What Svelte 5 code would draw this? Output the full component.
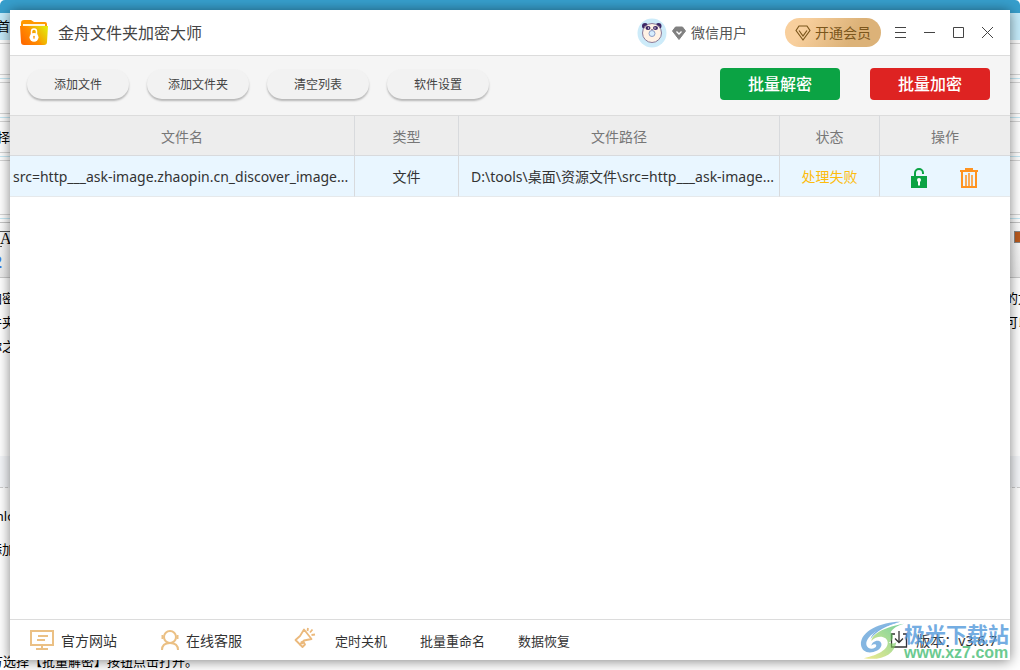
<script>
  let files = $state([
    {
      name: 'src=http___ask-image.zhaopin.cn_discover_image...',
      type: '文件',
      path: 'D:\\tools\\桌面\\资源文件\\src=http___ask-image...',
      status: '处理失败'
    }
  ])

  const tools = ['添加文件', '添加文件夹', '清空列表', '软件设置']
  const links = ['定时关机', '批量重命名', '数据恢复']

  function removeFile(index) {
    files.splice(index, 1)
  }

  function handleTool(tool) {
    if (tool === '清空列表') files = []
  }
</script>

<div class="desktop">
  <div class="page">
    <div class="page__top"></div>
    <div class="page__tabs"><span>首</span></div>
    <div class="page__bar"></div>
    <div class="page__bar"></div>
    <div class="page__bar"><span>择</span></div>
    <div class="page__bar page__bar--tall"></div>
    <div class="page__editor">
      <span class="page__font">A<b>2</b></span>
      <i class="page__swatch"></i>
    </div>
    <div class="page__text">
      <p><span>加密</span><span>的文</span></p>
      <p><span>件夹</span><span>可以</span></p>
      <p><span>你之</span></p>
    </div>
    <div class="page__band"></div>
    <div class="page__list">
      <p><span>downlo</span></p>
      <p><span>添加</span></p>
    </div>
    <p class="page__last">方选择【批量解密】按钮点击打开。</p>
  </div>

  <main class="window">
    <header class="titlebar">
      <svg class="titlebar__logo" width="28" height="26" viewBox="0 0 28 26" aria-hidden="true">
        <defs>
          <linearGradient id="folder" x1="0" y1="0.7" x2="1" y2="0.2">
            <stop offset="0" stop-color="#ff6a00" />
            <stop offset="0.5" stop-color="#ff9200" />
            <stop offset="0.55" stop-color="#f5a800" />
            <stop offset="1" stop-color="#e4e70b" />
          </linearGradient>
        </defs>
        <path d="M1 3a3 3 0 0 1 3-3h7l3 2h11a2 2 0 0 1 2 2v8H1z" fill="#ff9800" />
        <path d="M3 4h22v5H3z" fill="#fff5df" />
        <path d="M0 6h28l-1 16a3 3 0 0 1-3 3H4a3 3 0 0 1-3-3z" fill="url(#folder)" />
        <path d="M11.5 14v-2.5a2.5 2.5 0 0 1 5 0V14" fill="none" stroke="#fff" stroke-width="1.5" />
        <ellipse cx="14" cy="17.3" rx="4.5" ry="4.4" fill="#fff" />
        <circle cx="14" cy="16.7" r="1" fill="#ffa42b" />
        <path d="M14 17v2" stroke="#ffa42b" />
      </svg>
      <h1 class="titlebar__name">金舟文件夹加密大师</h1>

      <div class="user">
        <svg width="30" height="30" viewBox="0 0 30 30" aria-hidden="true">
          <circle cx="15" cy="15" r="14.5" fill="#cdebf9" />
          <circle cx="8" cy="8" r="3" fill="#3d2665" />
          <circle cx="21.5" cy="8" r="3" fill="#3d2665" />
          <ellipse cx="15" cy="15" rx="9.5" ry="9.5" fill="#fff2e5" stroke="#8b7a98" />
          <ellipse cx="11" cy="10" rx="2.5" ry="2" fill="#3d2665" />
          <ellipse cx="18.5" cy="10" rx="2.5" ry="2" fill="#3d2665" />
          <circle cx="11.5" cy="10" r="0.7" fill="#fff" />
          <circle cx="18" cy="10" r="0.7" fill="#fff" />
          <path d="M14 11h2l-1 1z" fill="#3d2665" />
          <circle cx="15" cy="15.5" r="3" fill="#d5edff" stroke="#8e9dc4" />
        </svg>
        <svg width="14" height="14" viewBox="0 0 14 14" aria-hidden="true">
          <path d="M3.5 1h7L13.5 5 7 13.5.5 5z" fill="#808080" stroke="#808080" stroke-linejoin="round" />
          <path d="M4.500 5.500 7 8l2.500-2.500" fill="none" stroke="#fff" stroke-width="1.3" />
        </svg>
        <span>微信用户</span>
      </div>

      <button class="vip">
        <svg width="16" height="16" viewBox="0 0 16 16" fill="none" stroke="#7b561c" stroke-width="1.2" aria-hidden="true">
          <path d="M4 1h8l3 4.500L8 15 1 5.500z" stroke-linejoin="round" />
          <path d="M4 5.500 8 11l4-5.500" />
        </svg>
        开通会员
      </button>

      <div class="controls">
        <button aria-label="菜单">
          <svg width="13" height="13" viewBox="0 0 13 13"><path d="M1 1.500h11M1 6.500h11M1 11.500h11" /></svg>
        </button>
        <button aria-label="最小化">
          <svg width="13" height="13" viewBox="0 0 13 13"><path d="M1 6.500h11" /></svg>
        </button>
        <button aria-label="最大化">
          <svg width="13" height="13" viewBox="0 0 13 13"><path d="M1.500 1.500h10v10h-10z" /></svg>
        </button>
        <button aria-label="关闭">
          <svg width="13" height="13" viewBox="0 0 13 13"><path d="m1 1 11 11M12 1 1 12" /></svg>
        </button>
      </div>
    </header>

    <div class="toolbar">
      {#each tools as tool}
        <button class="toolbar__tool" onclick={() => handleTool(tool)}>{tool}</button>
      {/each}
      <div class="toolbar__actions">
        <button class="action action--decrypt">批量解密</button>
        <button class="action action--encrypt">批量加密</button>
      </div>
    </div>

    <div class="list">
      <table>
        <colgroup>
          <col class="col-name" />
          <col class="col-type" />
          <col class="col-path" />
          <col class="col-status" />
          <col class="col-ops" />
        </colgroup>
        <thead>
          <tr>
            <th>文件名</th>
            <th>类型</th>
            <th>文件路径</th>
            <th>状态</th>
            <th>操作</th>
          </tr>
        </thead>
        <tbody>
          {#each files as file, i}
            <tr>
              <td class="name">{file.name}</td>
              <td>{file.type}</td>
              <td class="path">{file.path}</td>
              <td class="status">{file.status}</td>
              <td>
                <div class="ops">
                  <button aria-label="解密">
                    <svg width="18" height="20" viewBox="0 0 18 20">
                      <path d="M5 9V5a4 4 0 0 1 8 0v1" fill="none" stroke="#0ba344" stroke-width="2" />
                      <path d="M1 8h16v12H1z" fill="#0ba344" />
                      <path d="M11 6.500h4v1.500h-4z" fill="#e9f6ff" />
                      <circle cx="9" cy="12" r="2" fill="#fff" />
                      <path d="M9 12v5.500" stroke="#fff" stroke-width="2" />
                    </svg>
                  </button>
                  <button aria-label="删除" onclick={() => removeFile(i)}>
                    <svg width="18" height="20" viewBox="0 0 18 20" fill="none" stroke="#ff9320" stroke-width="2">
                      <path d="M0 3h18M5 1h8M2 3v16h14V3" />
                      <path d="M6 7v11M9 5v13M12 7v11" stroke-width="1.500" />
                    </svg>
                  </button>
                </div>
              </td>
            </tr>
          {/each}
        </tbody>
      </table>
    </div>

    <footer class="footer">
      <a class="footer__link" href="#site">
        <svg width="24" height="20" viewBox="0 0 24 20" fill="none" stroke="#ebc084" stroke-width="2" aria-hidden="true">
          <path d="M1 1h22v14H1zM12 15v4M6 19h12M8 6h10M7 10h8" />
        </svg>
        官方网站
      </a>
      <a class="footer__link" href="#support">
        <svg width="18" height="20" viewBox="0 0 18 20" fill="none" stroke="#ebc084" stroke-width="2" aria-hidden="true">
          <circle cx="9" cy="7" r="6" />
          <path d="M1 20c0-5 3-7 8-7s8 2 8 7M1.500 5v4M16.500 5v4" />
        </svg>
        在线客服
      </a>
      <svg class="footer__horn" width="22" height="22" viewBox="0 0 22 22" fill="none" stroke="#ebb97c" stroke-width="1.8" stroke-linejoin="round" aria-hidden="true">
        <path d="M10 2.500 17.500 12l-7.500 1.500-4 4L1.500 13 6 9z" />
        <path d="m6 17.500 2.500 2.500 2.500-2.500-2-3.500M7 14.500 9 17M14 1l-.5 3M18.500 2.500 16 5.500M21 7.500l-3.500.5" />
      </svg>
      <nav class="footer__nav">
        {#each links as link}
          <a href="#{link}">{link}</a>
        {/each}
      </nav>
      <div class="footer__version">
        <svg width="18" height="18" viewBox="0 0 18 18" fill="none" stroke="#333" stroke-width="1.3" aria-hidden="true">
          <path d="M5 3H1.500v13h15V3H13M9 0v11M5 7.500 9 11.500l4-4" />
        </svg>
        <span>版本：v3.6.7</span>
      </div>

      <div class="mark">
        <svg width="44" height="40" viewBox="0 0 46 40" aria-hidden="true">
          <defs>
            <linearGradient id="leaf" x1="0" y1="1" x2="1" y2="0">
              <stop offset="0" stop-color="#eadf50" />
              <stop offset="0.6" stop-color="#72c95d" />
              <stop offset="1" stop-color="#25b46a" />
            </linearGradient>
          </defs>
          <path d="M42 1C22 1 0 11 1 25c1 8 9 10 17 6 5-3 6-8 2-10-4-1-8 2-8 5 2-2 5-2 5 0 0 3-8 5-10 0C4 17 21 6 42 1z" fill="#67a5da" />
          <path d="M46 3C28 6 12 13 12 21c6-7 17-5 17 2 0 9-15 14-25 16 19 3 32-4 34-17-2 2-5 2-8 1 5-3 6-8 2-11 2-4 7-7 14-9z" fill="url(#leaf)" opacity="0.8" />
          <path d="M42 1C25 4 13 11 11 19c6-9 18-14 31-18z" fill="#5b9fdd" />
        </svg>
        <div class="mark__text">
          <span>极光下载站</span>
          <b>www.xz7.com</b>
        </div>
      </div>
    </footer>
  </main>
</div>

<style>
  :global(body) {
    margin: 0;
    background: #fff;
  }

  .desktop {
    position: relative;
    box-sizing: border-box;
    height: 100vh;
    padding: 10px;
    overflow: hidden;
    font-family: 'Noto Sans', 'Noto Sans CJK SC', sans-serif;
    font-size: 14px;
    color: #333;
  }

  button {
    padding: 0;
    border: none;
    background: none;
    font-family: inherit;
    color: inherit;
    cursor: pointer;
  }

  a {
    color: inherit;
    text-decoration: none;
  }

  svg {
    display: block;
    flex: none;
  }

  /* page behind the window */
  .page {
    position: absolute;
    inset: 0;
    display: flex;
    flex-direction: column;
    font-size: 13px;
    color: #000;
  }

  .page > * {
    flex: none;
    box-sizing: border-box;
  }

  .page p {
    margin: 0;
  }

  .page__top {
    height: 13px;
    border-radius: 5px 5px 0 0;
    background: #379fcd;
  }

  .page__tabs {
    height: 27px;
    line-height: 27px;
    background: #c5ecfb;
  }

  .page__tabs span,
  .page__bar span {
    display: flex;
    justify-content: flex-end;
    width: 10px;
  }

  .page__bar {
    height: 39px;
    padding-top: 4px;
    line-height: 30px;
    border-bottom: 1px solid #c5e9f6;
    background: linear-gradient(#d5d5d5, #d5d5d5) 0 3px / 100% 1px no-repeat,
      linear-gradient(#d5d5d5, #d5d5d5) 0 34px / 100% 1px no-repeat;
  }

  .page__bar--tall {
    height: 62px;
    background: linear-gradient(#d5d5d5, #d5d5d5) 0 3px / 100% 1px no-repeat,
      linear-gradient(#d5d5d5, #d5d5d5) 0 57px / 100% 1px no-repeat;
  }

  .page__editor {
    display: flex;
    justify-content: space-between;
    height: 59px;
    padding-top: 12px;
    border-bottom: 1px solid #c9c9c9;
    background: linear-gradient(#c5c5c5, #c5c5c5) 0 3px / 100% 1px no-repeat,
      linear-gradient(#fff, #ececec);
  }

  .page__font {
    width: 10px;
    font-family: 'Liberation Serif', serif;
    font-size: 16px;
    line-height: 14px;
    border-top: 1px solid #555;
  }

  .page__font b {
    display: flex;
    justify-content: flex-end;
    width: 2px;
    margin-right: -2px;
    padding-top: 9px;
    border-top: 1px solid #555;
    font-family: 'Liberation Sans', sans-serif;
    color: #3b76e0;
  }

  .page__swatch {
    width: 5px;
    height: 10px;
    border: 1px solid #888;
    border-right: none;
    background: #b95a1e;
  }

  .page__text {
    height: 178px;
    padding-top: 8px;
    line-height: 24px;
  }

  .page__text p,
  .page__list p {
    display: flex;
    justify-content: space-between;
  }

  .page__text span,
  .page__list span {
    display: flex;
    justify-content: flex-end;
    width: 15px;
    white-space: nowrap;
  }

  .page__text span + span {
    justify-content: flex-start;
  }

  .page__band {
    height: 32px;
    border-bottom: 1px dashed #ccc;
    background: #f4f6f9;
  }

  .page__list {
    height: 161px;
    padding-top: 12px;
    line-height: 33px;
  }

  .page__last {
    display: flex;
    height: 24px;
    line-height: 24px;
    text-indent: -10px;
  }

  .window {
    position: relative;
    display: flex;
    flex-direction: column;
    height: 100%;
    background: #fff;
    box-shadow: 0 1px 12px rgba(0, 0, 0, 0.5);
  }

  .titlebar {
    display: flex;
    align-items: center;
    height: 45px;
    padding: 0 16px 0 10px;
    border-bottom: 1px solid #dcdcdc;
  }

  .titlebar__name {
    flex: 1;
    margin: 0 0 0 10px;
    font-size: 16px;
    line-height: 22px;
    font-weight: 400;
    color: #444;
  }

  .user {
    display: flex;
    align-items: center;
    gap: 5px;
    margin-right: 38px;
    line-height: 18px;
    color: #555;
  }

  .vip {
    display: flex;
    align-items: center;
    justify-content: center;
    gap: 4px;
    width: 96px;
    height: 29px;
    margin-right: 13px;
    border-radius: 15px;
    background: linear-gradient(120deg, #f8cf9d 20%, #dcb278 70%);
    font-size: 14px;
    line-height: 18px;
    color: #7b561c;
  }

  .controls {
    display: flex;
    gap: 16px;
  }

  .controls svg {
    fill: none;
    stroke: #444;
  }

  .toolbar {
    display: flex;
    align-items: center;
    gap: 18px;
    height: 59px;
    box-sizing: border-box;
    padding: 0 20px 4px 17px;
    background: #f5f5f5;
  }

  .toolbar__tool {
    width: 102px;
    height: 30px;
    border-radius: 15px;
    background: #f2f2f2;
    box-shadow: 0 2px 2px rgba(0, 0, 0, 0.25);
    font-size: 12px;
    color: #444;
  }

  .toolbar__actions {
    display: flex;
    gap: 30px;
    margin-left: auto;
  }

  .action {
    width: 120px;
    height: 32px;
    border-radius: 4px;
    font-size: 16px;
    font-weight: 500;
    line-height: 30px;
    color: #fff;
  }

  .action--decrypt {
    background: #0ba344;
  }

  .action--encrypt {
    background: #de2322;
  }

  .list {
    flex: 1;
    min-height: 0;
    overflow: hidden;
  }

  table {
    width: 100%;
    table-layout: fixed;
    border-collapse: separate;
    border-spacing: 0;
  }

  .col-name {
    width: 34.5%;
  }

  .col-type {
    width: 10.4%;
  }

  .col-path {
    width: 32.1%;
  }

  .col-status {
    width: 10%;
  }

  .col-ops {
    width: 13%;
  }

  th,
  td {
    box-sizing: border-box;
    height: 41px;
    padding: 0;
    border-right: 1px solid #d8dadd;
    border-bottom: 1px solid #d8dadd;
    text-align: center;
    white-space: nowrap;
    overflow: hidden;
  }

  th {
    border-top: 1px solid #dcdcdc;
    background: #ededed;
    font-weight: 400;
    color: #777;
  }

  td {
    background: #e9f6ff;
    border-bottom-color: #e6e9eb;
  }

  th:last-child,
  td:last-child {
    border-right: none;
  }

  .name {
    padding-left: 3px;
    text-align: left;
  }

  .path {
    padding-left: 12px;
    text-align: left;
  }

  .status {
    color: #fdbc0d;
  }

  .ops {
    display: flex;
    justify-content: center;
    gap: 32px;
    padding: 4px 2px 0 0;
  }

  .footer {
    position: relative;
    display: flex;
    align-items: center;
    height: 40px;
    padding: 0 13px 0 20px;
    border-top: 1px solid #dcdcdc;
  }

  .footer__link {
    display: flex;
    align-items: center;
    gap: 7px;
    margin-right: 44px;
  }

  .footer__horn {
    margin: 0 19px 4px 8px;
  }

  .footer__nav {
    display: flex;
    gap: 33px;
    font-size: 13px;
  }

  .footer__version {
    display: flex;
    align-items: center;
    gap: 8px;
    margin-left: auto;
  }

  /* site mark laid over the version */
  .mark {
    position: absolute;
    right: 0;
    bottom: 0;
    display: flex;
    align-items: flex-end;
    opacity: 0.8;
    pointer-events: none;
  }

  .mark__text {
    display: flex;
    flex-direction: column;
    width: 106px;
    white-space: nowrap;
  }

  .mark__text span {
    font-size: 21px;
    font-weight: 700;
    line-height: 24px;
    color: #5299db;
  }

  .mark__text b {
    font-family: 'Liberation Sans', sans-serif;
    font-size: 16px;
    line-height: 14px;
    color: #46bd75;
  }
</style>
